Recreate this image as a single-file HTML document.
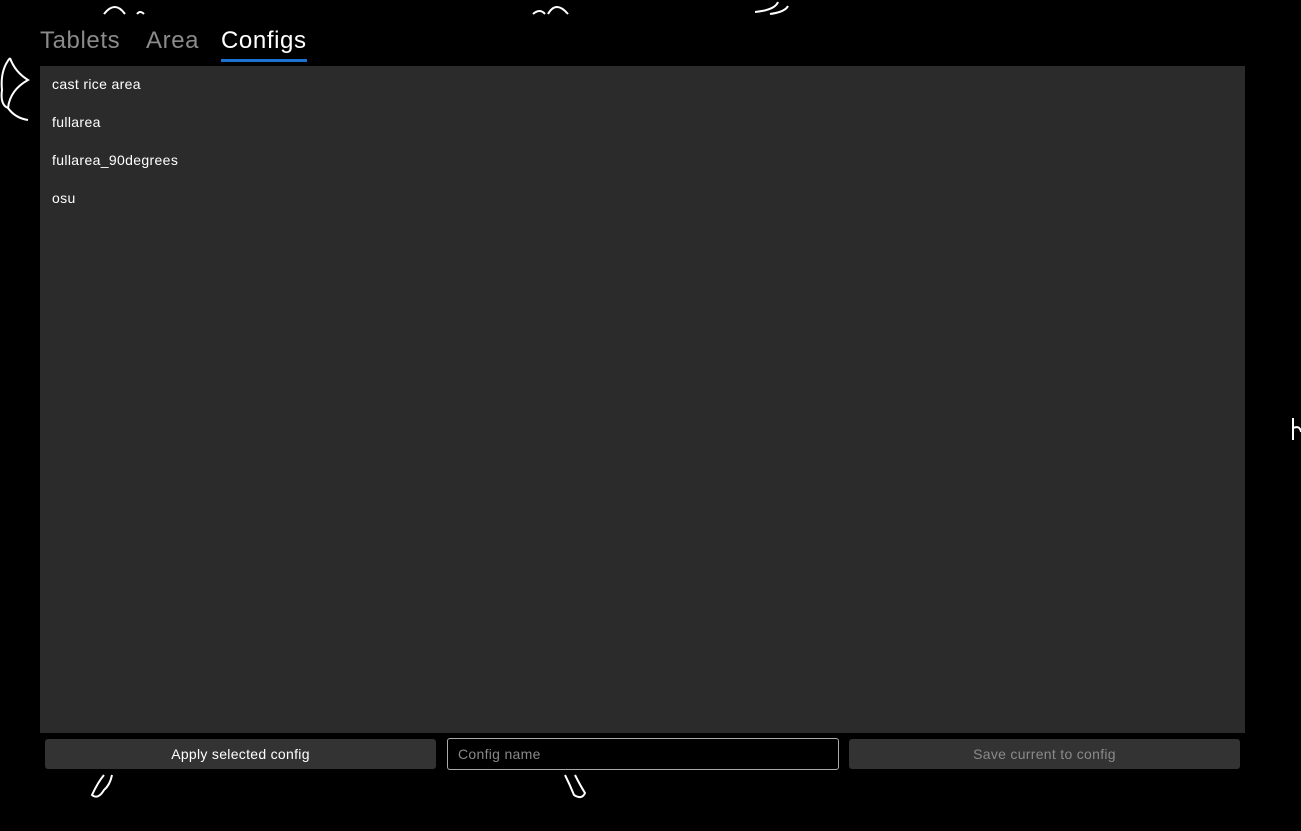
<!DOCTYPE html>
<html><head><style>
body{margin:0;width:1301px;height:831px;background:#000;overflow:hidden;position:relative;font-family:"Liberation Sans",sans-serif}
.tab{position:absolute;top:27px;font-size:24px;color:#8a8a8a;letter-spacing:0.6px}
.panel{position:absolute;left:40px;top:66px;width:1205px;height:667px;background:#2b2b2b}
.item{position:absolute;left:12px;font-size:14px;color:#fff;letter-spacing:0.35px}
.btn{position:absolute;top:739px;height:30px;background:#333;border-radius:3px;font-size:14px;color:#fff;text-align:center;line-height:30px;letter-spacing:0.3px}
</style></head><body>
<svg style="position:absolute;left:0;top:0" width="1301" height="831" fill="none" stroke="#fff" stroke-width="2">
<path d="M104 14 Q115 0 125 14"/><path d="M137 14 Q140 10 144 14"/>
<path d="M533 14 Q540 8 545 14 M548 14 Q556 0 568 14"/>
<path d="M755 12 Q775 10 778 2 M770 14 Q785 12 788 6"/>
<path d="M10 58 Q15 72 28 80 Q10 90 8 108 Q15 118 28 120 M10 58 Q0 70 2 90 Q0 105 8 108"/>
<path d="M104 775 Q98 782 92 795 Q98 800 104 790 Q110 785 112 775"/>
<path d="M565 775 Q570 785 574 795 Q582 800 585 793 Q580 785 575 775"/>
<path d="M1293 418 L1293 440 M1293 428 Q1300 425 1301 432"/>
</svg>
<div class="tab" style="left:40px">Tablets</div>
<div class="tab" style="left:146px">Area</div>
<div class="tab" style="left:221px;color:#fff">Configs</div>
<div style="position:absolute;left:221px;top:59px;width:86px;height:3px;background:#1a73d0"></div>
<div class="panel">
<div class="item" style="top:10px">cast rice area</div>
<div class="item" style="top:48px">fullarea</div>
<div class="item" style="top:86px">fullarea_90degrees</div>
<div class="item" style="top:124px">osu</div>
</div>
<div class="btn" style="left:45px;width:391px">Apply selected config</div>
<div style="position:absolute;left:447px;top:738px;width:392px;border:1px solid #aaa;border-radius:3px;background:#000;color:#888;font-size:14px;line-height:30px;padding-left:10px;box-sizing:border-box;height:32px;letter-spacing:0.3px">Config name</div>
<div class="btn" style="left:849px;width:391px;color:#8a8a8a">Save current to config</div>
</body></html>
